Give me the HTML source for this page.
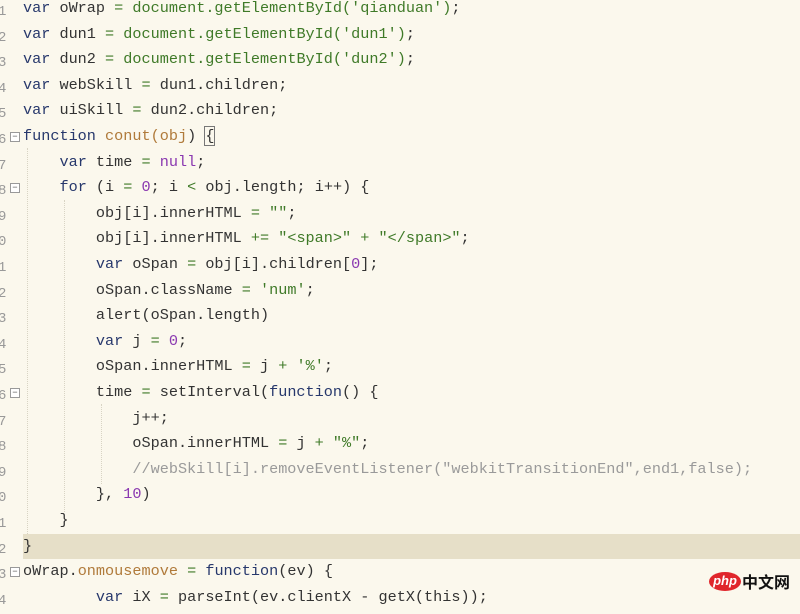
<!DOCTYPE html><html><head><style>
body{margin:0;width:800px;height:601px;overflow:hidden;background:#fbf8ed;font-family:"Liberation Mono",monospace;font-size:15.2px;color:#333;position:relative}
.l{position:absolute;left:0;height:25.6px;line-height:25.6px;white-space:pre;width:800px}
.n{position:absolute;left:-2px;color:#999;font-size:14px;top:4px}
.c{position:absolute;left:23px}
.f{position:absolute;left:10px;top:8px;width:8px;height:8px;border:1px solid #999;background:#fff;font-size:9px;line-height:8px;text-align:center;color:#555}
.k{color:#27386c}.s{color:#3f7a28}.o{color:#3f7a28}.fn{color:#b07a3a}.p{color:#8a38b0}.cm{color:#9a9a9a}
.hl{background:#e6dfc8}
.g{position:absolute;border-left:1px dotted #d8d4c4;top:150px}
</style></head><body>
<div class="g" style="left:27px;top:148px;height:390px"></div>
<div class="g" style="left:64px;top:200px;height:312px"></div>
<div class="g" style="left:101px;top:404px;height:80px"></div>
<div class="l" style="top:-4px"><span class="n">1</span><span class="c"><span class="k">var</span> oWrap <span class="o">=</span> <span class="s">document.getElementById('qianduan')</span>;</span></div>
<div class="l" style="top:21.6px"><span class="n">2</span><span class="c"><span class="k">var</span> dun1 <span class="o">=</span> <span class="s">document.getElementById('dun1')</span>;</span></div>
<div class="l" style="top:47.2px"><span class="n">3</span><span class="c"><span class="k">var</span> dun2 <span class="o">=</span> <span class="s">document.getElementById('dun2')</span>;</span></div>
<div class="l" style="top:72.8px"><span class="n">4</span><span class="c"><span class="k">var</span> webSkill <span class="o">=</span> dun1.children;</span></div>
<div class="l" style="top:98.4px"><span class="n">5</span><span class="c"><span class="k">var</span> uiSkill <span class="o">=</span> dun2.children;</span></div>
<div class="l" style="top:124px"><span class="n">6</span><span class="f">−</span><span class="c"><span class="k">function</span> <span class="fn">conut(</span><span class="fn">obj</span>) <span style="outline:1px solid #777">{</span></span></div>
<div class="l" style="top:149.6px"><span class="n">7</span><span class="c">    <span class="k">var</span> time <span class="o">=</span> <span class="p">null</span>;</span></div>
<div class="l" style="top:175.2px"><span class="n">8</span><span class="f">−</span><span class="c">    <span class="k">for</span> (i <span class="o">=</span> <span class="p">0</span>; i <span class="o">&lt;</span> obj.length; i++) {</span></div>
<div class="l" style="top:200.8px"><span class="n">9</span><span class="c">        obj[i].innerHTML <span class="o">=</span> <span class="s">""</span>;</span></div>
<div class="l" style="top:226.4px"><span class="n">0</span><span class="c">        obj[i].innerHTML <span class="o">+=</span> <span class="s">"&lt;span&gt;"</span> <span class="o">+</span> <span class="s">"&lt;/span&gt;"</span>;</span></div>
<div class="l" style="top:252px"><span class="n">1</span><span class="c">        <span class="k">var</span> oSpan <span class="o">=</span> obj[i].children[<span class="p">0</span>];</span></div>
<div class="l" style="top:277.6px"><span class="n">2</span><span class="c">        oSpan.className <span class="o">=</span> <span class="s">'num'</span>;</span></div>
<div class="l" style="top:303.2px"><span class="n">3</span><span class="c">        alert(oSpan.length)</span></div>
<div class="l" style="top:328.8px"><span class="n">4</span><span class="c">        <span class="k">var</span> j <span class="o">=</span> <span class="p">0</span>;</span></div>
<div class="l" style="top:354.4px"><span class="n">5</span><span class="c">        oSpan.innerHTML <span class="o">=</span> j <span class="o">+</span> <span class="s">'%'</span>;</span></div>
<div class="l" style="top:380px"><span class="n">6</span><span class="f">−</span><span class="c">        time <span class="o">=</span> setInterval(<span class="k">function</span>() {</span></div>
<div class="l" style="top:405.6px"><span class="n">7</span><span class="c">            j++;</span></div>
<div class="l" style="top:431.2px"><span class="n">8</span><span class="c">            oSpan.innerHTML <span class="o">=</span> j <span class="o">+</span> <span class="s">"%"</span>;</span></div>
<div class="l" style="top:456.8px"><span class="n">9</span><span class="c cm">            //webSkill[i].removeEventListener("webkitTransitionEnd",end1,false);</span></div>
<div class="l" style="top:482.4px"><span class="n">0</span><span class="c">        }, <span class="p">10</span>)</span></div>
<div class="l" style="top:508px"><span class="n">1</span><span class="c">    }</span></div>
<div class="l" style="top:533.6px"><span class="n">2</span><span class="c hl" style="width:777px">}</span></div>
<div class="l" style="top:559.2px"><span class="n">3</span><span class="f">−</span><span class="c">oWrap.<span class="fn">onmousemove</span> <span class="o">=</span> <span class="k">function</span>(ev) {</span></div>
<div class="l" style="top:584.8px"><span class="n">4</span><span class="c">        <span class="k">var</span> iX <span class="o">=</span> parseInt(ev.clientX - getX(this));</span></div>
<div style="position:absolute;left:709px;top:572px;width:32px;height:19px;border-radius:50%;background:#e0262c;color:#fff;font:italic bold 13px 'Liberation Sans',sans-serif;text-align:center;line-height:18px">php</div>
<div style="position:absolute;left:742px;top:570px;font:bold 16px 'Noto Sans CJK SC',sans-serif;color:#111;line-height:22px">中文网</div>
</body></html>
